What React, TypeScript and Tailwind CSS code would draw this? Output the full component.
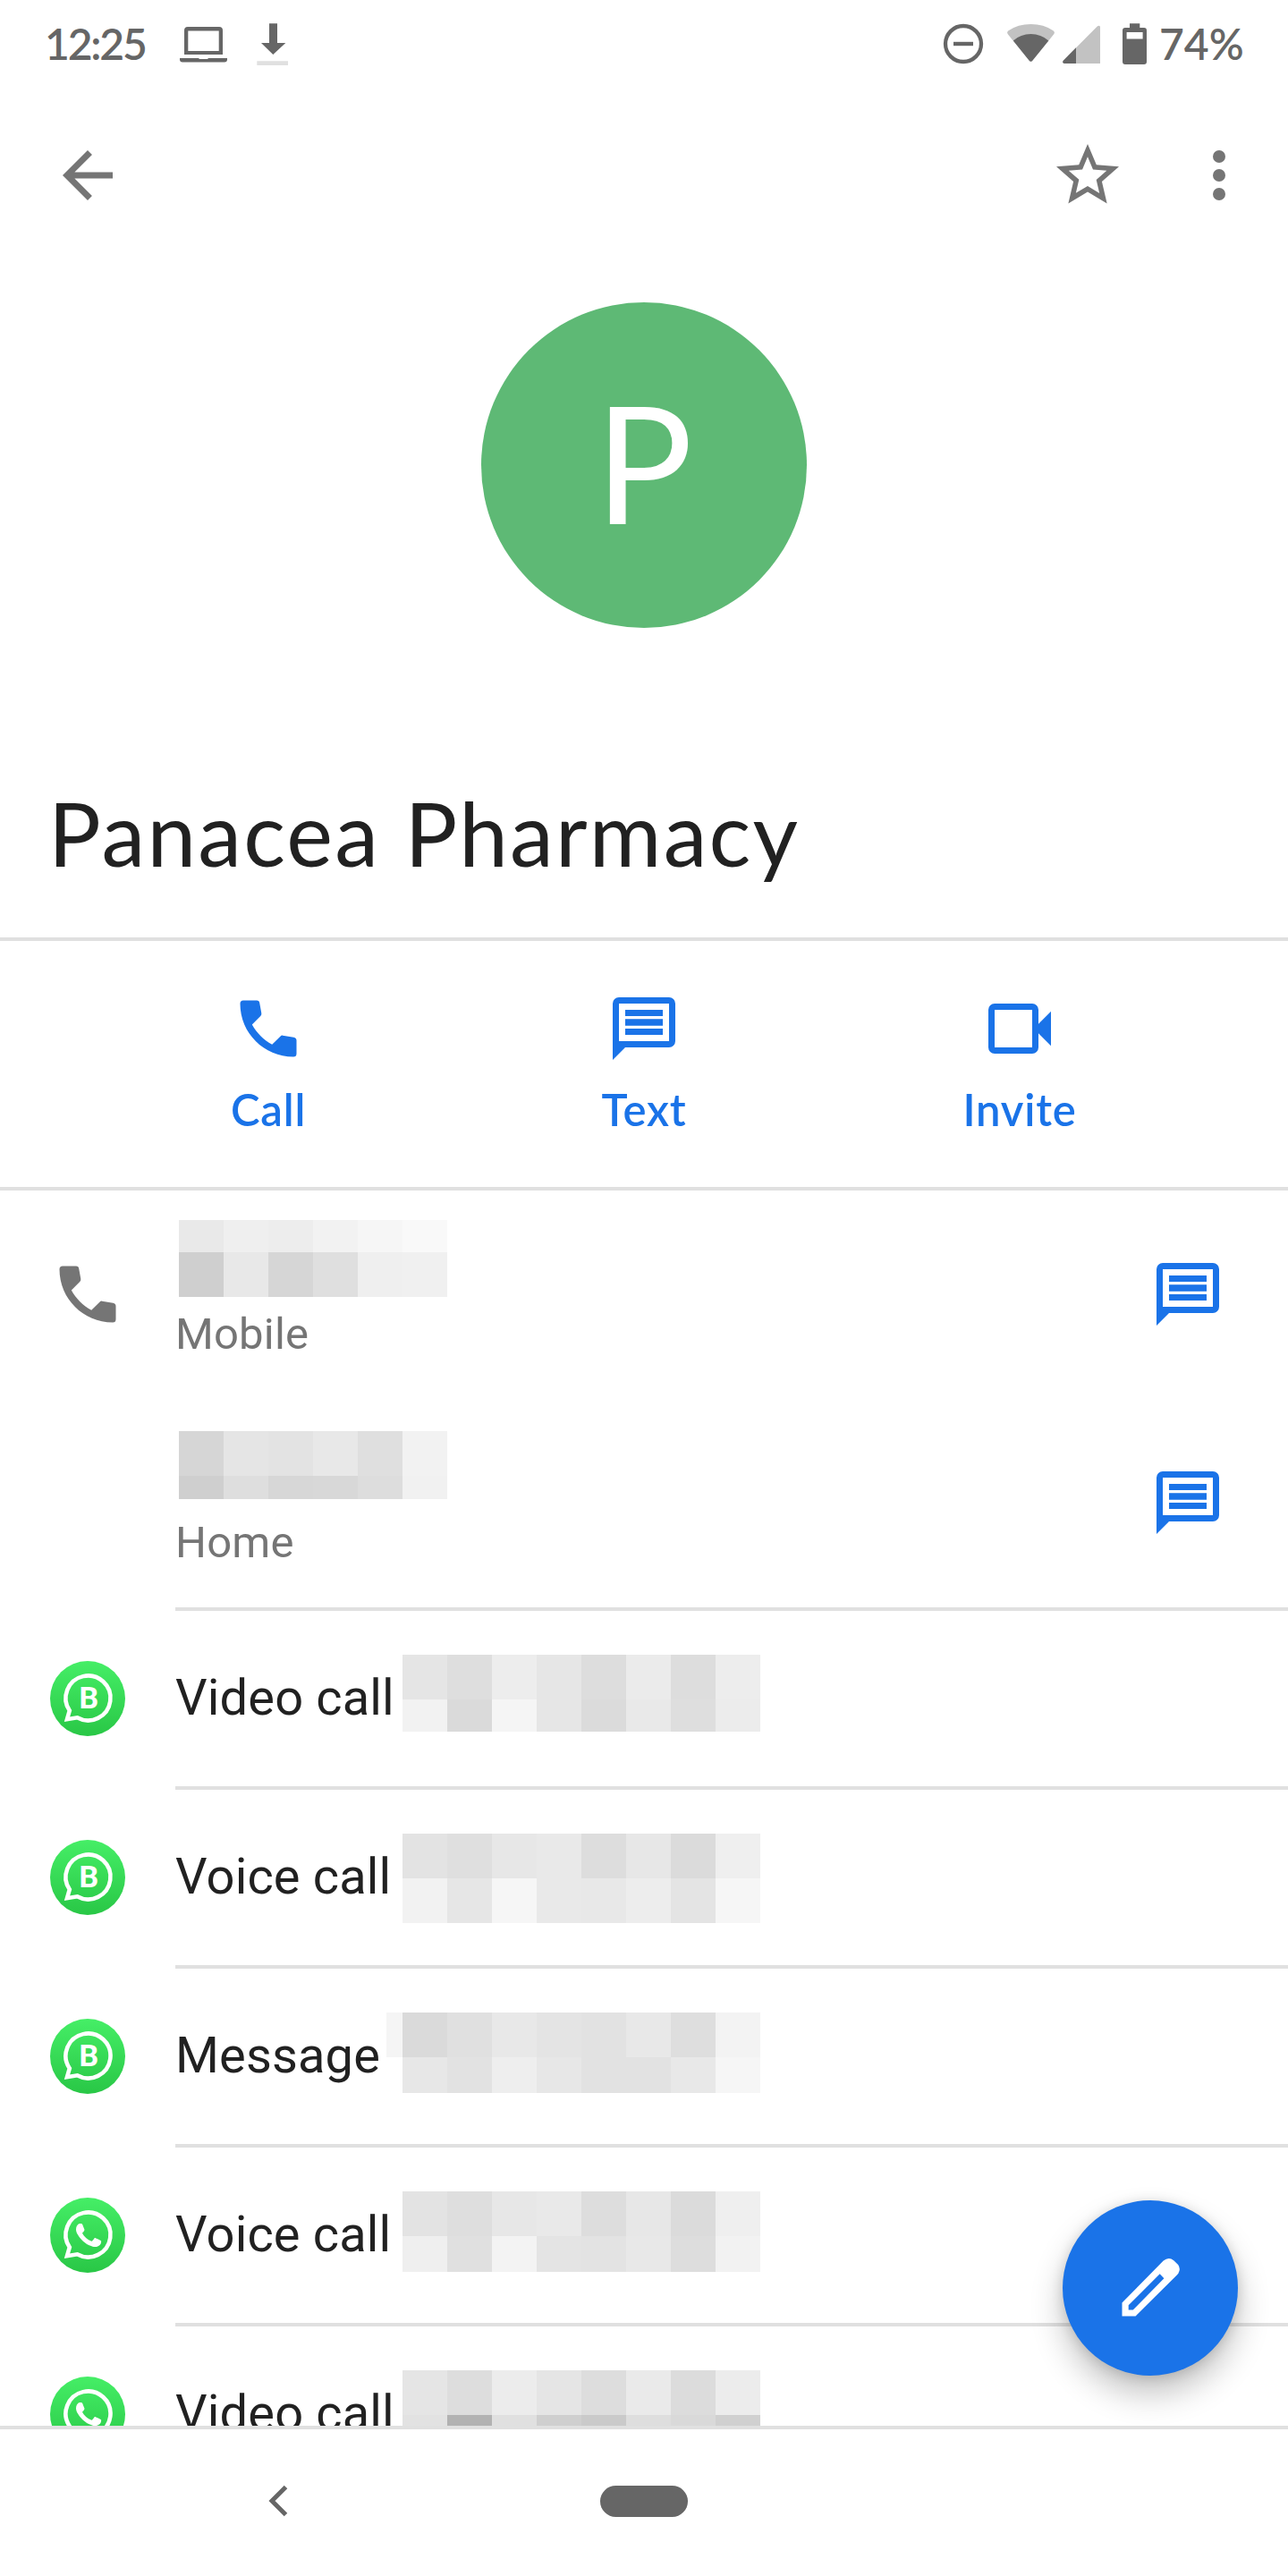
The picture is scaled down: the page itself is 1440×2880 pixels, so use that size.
import type { ReactNode } from 'react';

interface MosaicProps {
  rows: { height: number; cells: string[] }[];
}

interface Channel {
  id: number;
  label: string;
  business: boolean;
  rows: MosaicProps['rows'];
}

const phones = [
  {
    label: 'Mobile',
    pad: 'pt-[33px] gap-[13px]',
    rows: [
      { height: 36, cells: ['e9', 'ef', 'ed', 'f2', 'f6', 'f9'] },
      { height: 50, cells: ['cf', 'e8', 'd6', 'df', 'ef', 'f0'] },
    ],
  },
  {
    label: 'Home',
    pad: 'pt-[36px] gap-[20px]',
    rows: [
      { height: 50, cells: ['d6', 'e5', 'e3', 'e8', 'df', 'f2'] },
      { height: 26, cells: ['cf', 'de', 'd7', 'd8', 'dd', 'f1'] },
    ],
  },
];

const channels: Channel[] = [
  {
    id: 1,
    label: 'Video call',
    business: true,
    rows: [
      { height: 50, cells: ['e5', 'de', 'ed', 'e6', 'dd', 'eb', 'dd', 'ed'] },
      { height: 36, cells: ['f2', 'da', 'f5', 'e6', 'db', 'e9', 'de', 'ec'] },
    ],
  },
  {
    id: 2,
    label: 'Voice call',
    business: true,
    rows: [
      { height: 50, cells: ['e3', 'df', 'e7', 'e9', 'dd', 'e7', 'db', 'ef'] },
      { height: 50, cells: ['f2', 'e6', 'f6', 'e9', 'e8', 'ed', 'e4', 'f6'] },
    ],
  },
  {
    id: 3,
    label: 'Message',
    business: true,
    rows: [
      { height: 50, cells: ['da', 'e0', 'e8', 'e4', 'e2', 'e8', 'de', 'f3'] },
      { height: 40, cells: ['e7', 'e2', 'ee', 'e7', 'e2', 'e2', 'e8', 'f6'] },
    ],
  },
  {
    id: 4,
    label: 'Voice call',
    business: false,
    rows: [
      { height: 50, cells: ['e3', 'de', 'e7', 'e9', 'dd', 'e7', 'db', 'ef'] },
      { height: 40, cells: ['ef', 'e0', 'f3', 'e4', 'e3', 'e8', 'dd', 'f2'] },
    ],
  },
  {
    id: 5,
    label: 'Video call',
    business: false,
    rows: [
      { height: 50, cells: ['e5', 'dd', 'ec', 'e5', 'dd', 'ea', 'dc', 'ec'] },
      { height: 40, cells: ['e2', 'b2', 'e0', 'cf', 'ca', 'de', 'd9', 'd0'] },
    ],
  },
];

function Mosaic({ rows }: MosaicProps) {
  return (
    <div className="shrink-0">
      {rows.map((row, i) => (
        <div key={i} className="flex" style={{ height: row.height }}>
          {row.cells.map((c, j) => (
            <div key={j} className="w-[50px]" style={{ backgroundColor: `#${c}${c}${c}` }} />
          ))}
        </div>
      ))}
    </div>
  );
}

function Icon({ children, className = '' }: { children: ReactNode; className?: string }) {
  return (
    <svg viewBox="0 0 24 24" fill="currentColor" className={`size-[84px] shrink-0 ${className}`}>
      {children}
    </svg>
  );
}

const CallIcon = () => (
  <path d="M8.3 3H4Q3 3 3 4C3 13.4 10.6 21 20 21Q21 21 21 20V15.8Q21 15 20.1 14.8L16.6 14.2Q16.2 14.1 15.9 14.4L13.2 17.1C10.5 15.6 8.3 13.4 6.8 10.7L9.5 8Q9.9 7.6 9.8 7.1L9.2 3.8Q9.1 3 8.3 3Z" />
);

const ChatIcon = () => (
  <path
    fillRule="evenodd"
    d="M4 2h16a2 2 0 0 1 2 2v12a2 2 0 0 1-2 2H6l-4 4V4a2 2 0 0 1 2-2zM4 4v12h16V4zM6 6h12v2H6zM6 8.95h12v2.1H6zM6 12h12v2H6z"
  />
);

const VideoIcon = () => (
  <path
    fillRule="evenodd"
    d="M4 4h12a2 2 0 0 1 2 2v4.5l4-4v11l-4-4V18a2 2 0 0 1-2 2H4a2 2 0 0 1-2-2V6a2 2 0 0 1 2-2zM4 6v12h12V6z"
  />
);

function WhatsAppIcon({ business }: { business: boolean }) {
  return (
    <svg viewBox="0 0 84 84" className="size-[84px]">
      <defs>
        <linearGradient id="wa" x1="0" y1="0" x2="0" y2="1">
          <stop offset="0" stopColor="#45ee66" />
          <stop offset="1" stopColor="#29c746" />
        </linearGradient>
      </defs>
      <circle cx="42" cy="42" r="42" fill="url(#wa)" />
      <path
        d="M19 65.2L21.8 55.5A25 25 0 1 1 30.3 63.3Z"
        fill="none"
        stroke="#fff"
        strokeWidth="4.6"
      />
      {business ? (
        <text
          x="43.4"
          y="53.4"
          textAnchor="middle"
          fill="#fff"
          className="font-['Roboto',sans-serif] text-[34px] font-bold"
        >
          B
        </text>
      ) : (
        <path
          fill="#fff"
          transform="translate(15 14) scale(2.33)"
          d="M17.472 14.382c-.297-.149-1.758-.867-2.03-.967-.273-.099-.471-.148-.67.15-.197.297-.767.966-.94 1.164-.173.199-.347.223-.644.075-.297-.15-1.255-.463-2.39-1.475-.883-.788-1.48-1.761-1.653-2.059-.173-.297-.018-.458.13-.606.134-.133.298-.347.446-.52.149-.174.198-.298.298-.497.099-.198.05-.371-.025-.52-.075-.149-.669-1.612-.916-2.207-.242-.579-.487-.5-.669-.51-.173-.008-.371-.01-.57-.01-.198 0-.52.074-.792.372-.272.297-1.04 1.016-1.04 2.479 0 1.462 1.065 2.875 1.213 3.074.149.198 2.096 3.2 5.077 4.487.709.306 1.262.489 1.694.625.712.227 1.36.195 1.871.118.571-.085 1.758-.719 2.006-1.413.248-.694.248-1.289.173-1.413-.074-.124-.272-.198-.57-.347"
        />
      )}
    </svg>
  );
}

function StatusBar() {
  return (
    <div className="flex h-[98px] shrink-0 items-center justify-between pl-[50px] pr-[50px] text-[#666666]">
      <div className="flex items-center">
        <span className="w-[151px] font-['Lato',sans-serif] text-[48px] font-semibold leading-[98px] tracking-[-2.2px]">
          12:25
        </span>
        <svg viewBox="201 22 122 54" className="h-[54px] w-[122px]" fill="currentColor">
          <path fillRule="evenodd" d="M210 30h35a4 4 0 0 1 4 4v27h-43V34a4 4 0 0 1 4-4zM210.300 34.500v22.500h34.400V34.500z" />
          <path d="M201 65h21l1 1h9l1-1h21v1.500a3 3 0 0 1-3 3h-47a3 3 0 0 1-3-3z" />
          <path d="M301 26.300h9V48h9.300L305.300 61 292 48h9z" />
          <path fill="#e0e0e0" d="M287.300 68.300H322V73h-34.700z" />
        </svg>
      </div>
      <div className="flex items-center">
        <svg viewBox="1054 22 230 54" className="h-[54px] w-[230px]" fill="currentColor">
          <circle cx="1077" cy="49" r="20" fill="none" stroke="currentColor" strokeWidth="4.300" />
          <path d="M1066 46.800h22v4.400h-22z" />
          <path
            fill="#c2c2c2"
            d="M1127 38.500Q1125 36 1127.500 34.300Q1138 27 1152.500 27T1177.500 34.300Q1180 36 1178 38.500L1154.500 67.500Q1152.500 70 1150.500 67.500Z"
          />
          <path d="M1132.800 45.500Q1141 38 1152.500 38T1172.300 45.500L1154.500 67.500Q1152.500 70 1150.500 67.500Z" />
          <path fill="#c2c2c2" d="M1189 67.500L1226.500 29.800Q1228 28.500 1229.200 29T1230 31V71H1190Q1187 70 1189 67.500Z" />
          <path d="M1203 53.300V71H1190Q1186.800 70 1189 67.500Z" />
          <path
            fillRule="evenodd"
            d="M1263 26.300h11.300V31h4.700a3 3 0 0 1 3 3v35a3 3 0 0 1-3 3h-21a3 3 0 0 1-3-3V34a3 3 0 0 1 3-3h5zM1259.600 36v7.500h18V36z"
          />
        </svg>
        <span className="w-[106px] pl-[12px] font-['Lato',sans-serif] text-[48px] font-semibold leading-[98px]">74%</span>
      </div>
    </div>
  );
}

function Action({ label, children }: { label: string; children: ReactNode }) {
  return (
    <div className="flex flex-1 flex-col items-center pt-[56px] text-[#1a73e8]">
      <Icon>{children}</Icon>
      <span className="mt-[18px] font-['Lato',sans-serif] text-[49px] font-semibold leading-[60px] tracking-[0.8px]">
        {label}
      </span>
    </div>
  );
}

export default function App() {
  return (
    <div className="relative flex h-[2880px] w-[1440px] flex-col overflow-hidden bg-white font-['Roboto',sans-serif] text-[#212121]">
      <StatusBar />

      <div className="flex h-[196px] shrink-0 items-center pl-[56px] pr-[35px] text-[#757575]">
        <Icon>
          <path d="M20 11H7.830l5.590-5.590L12 4l-8 8 8 8 1.410-1.410L7.830 13H20z" />
        </Icon>
        <Icon className="ml-auto">
          <path d="M22 9.240l-7.190-.620L12 2 9.190 8.630 2 9.240l5.460 4.730L5.820 21 12 17.270 18.180 21l-1.630-7.030zM12 15.400l-3.760 2.270 1-4.280-3.320-2.880 4.380-.380L12 6.100l1.710 4.040 4.380.380-3.320 2.880 1 4.280z" />
        </Icon>
        <Icon className="ml-[63px]">
          <circle cx="12" cy="6" r="2" />
          <circle cx="12" cy="12" r="2" />
          <circle cx="12" cy="18" r="2" />
        </Icon>
      </div>

      <div className="mt-[44px] flex size-[364px] shrink-0 items-center justify-center self-center rounded-full bg-[#5eb975]">
        <span className="pb-[8px] font-['Lato',sans-serif] text-[182px] leading-[356px] text-white">P</span>
      </div>

      <h1 className="mt-[169px] h-[177px] shrink-0 pl-[54px] font-['Lato',sans-serif] text-[98px] leading-[120px] tracking-[2.2px]">
        Panacea Pharmacy
      </h1>

      <div className="flex h-[283px] shrink-0 border-y-4 border-[#e0e0e0] px-[90px]">
        <Action label="Call">
          <CallIcon />
        </Action>
        <Action label="Text">
          <ChatIcon />
        </Action>
        <Action label="Invite">
          <VideoIcon />
        </Action>
      </div>

      <main className="min-h-0 flex-1 overflow-hidden">
        {phones.map((phone, i) => (
          <div key={phone.label} className="flex h-[233px]">
            <div className="flex w-[196px] items-center pb-[2px] pl-[56px] text-[#757575]">
              {i === 0 && (
                <Icon>
                  <CallIcon />
                </Icon>
              )}
            </div>
            <div className={`flex flex-1 flex-col ${phone.pad}`}>
              <div className="pl-[4px]">
                <Mosaic rows={phone.rows} />
              </div>
              <span className="text-[49px] leading-[58px] tracking-[0.2px] text-[#757575]">{phone.label}</span>
            </div>
            <div className="flex items-center pb-[1px] pr-[70px] text-[#1a73e8]">
              <Icon>
                <ChatIcon />
              </Icon>
            </div>
          </div>
        ))}

        <div className="ml-[196px] h-1 bg-[#e0e0e0]" />

        {channels.map((channel) => (
          <div key={channel.id} className="flex h-[200px]">
            <div className="flex h-[196px] w-[196px] items-center pl-[56px]">
              <WhatsAppIcon business={channel.business} />
            </div>
            <div className="flex flex-1 border-b-4 border-[#e0e0e0]">
              <span className="flex-none pb-1 text-[56px] leading-[194px] tracking-[0.15px]">{channel.label}</span>
              <div className={channel.label === 'Message' ? 'ml-auto mt-[49px] flex w-[1008px]' : 'ml-auto mt-[49px] flex w-[990px]'}>
                {channel.label === 'Message' && <div className="h-[50px] w-[18px] bg-[#f5f5f5]" />}
                <Mosaic rows={channel.rows} />
              </div>
            </div>
          </div>
        ))}
      </main>

      <nav className="flex h-[168px] shrink-0 items-center border-t-4 border-[#e0e0e0] bg-white pb-1 text-[#666666]">
        <svg viewBox="0 0 22 36" className="ml-[300px] h-[36px] w-[22px]">
          <path d="M19.500 2.500L4 18l15.500 15.500" fill="none" stroke="currentColor" strokeWidth="5" />
        </svg>
        <div className="ml-[349px] h-[35px] w-[98px] rounded-full bg-[#666666]" />
      </nav>

      <button className="absolute left-[1188px] top-[2460px] flex size-[196px] items-center justify-center rounded-full bg-[#1a73e8] text-white shadow-[0_20px_36px_rgba(0,0,0,0.24),0_2px_14px_rgba(0,0,0,0.14)]">
        <Icon>
          <path
            fillRule="evenodd"
            d="M3 21V16.700L16.200 3.300Q17.900 1.900 19.500 3.200L20.900 4.600Q22 6.200 20.600 7.800L7.300 21ZM5.050 19H6.500L16.400 8.900L15.050 7.500L5.050 17.500Z"
          />
        </Icon>
      </button>
    </div>
  );
}
